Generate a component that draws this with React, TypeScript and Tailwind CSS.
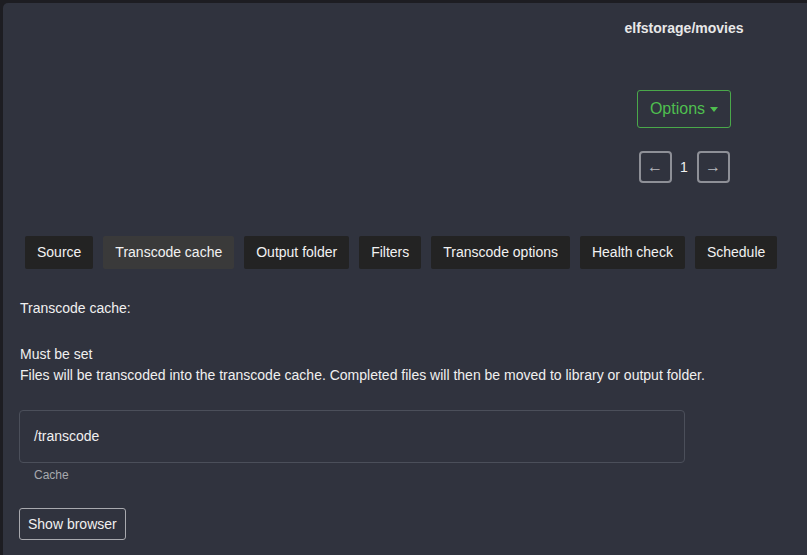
import React from "react";

const tabs = ["Source", "Transcode cache", "Output folder", "Filters", "Transcode options", "Health check", "Schedule"];

export default function App() {
  return (
    <div className="w-[807px] h-[555px] bg-[#1d1d22] pt-[3px] pl-[3px] overflow-hidden" style={{ fontFamily: '"Liberation Sans", Arial, sans-serif' }}>
      <div className="w-full h-full bg-[#30333e] rounded-tl-[5px] text-[#f0f0f0] text-[14px]">
        <div className="flex justify-end pr-[43px]">
          <div className="w-[160px] flex flex-col items-center">
            <div className="mt-[17px] h-[17px] leading-[17px] text-[14px] font-bold text-[#e8e8e8]">elfstorage/movies</div>
            <button className="mt-[53px] w-[94px] h-[38px] border border-[#4aa84a] rounded-[3px] text-[#4fbf4f] text-[16px] flex items-center justify-center gap-[5px]">
              Options
              <span className="w-0 h-0 border-l-[4px] border-r-[4px] border-t-[5px] border-l-transparent border-r-transparent border-t-[#4fbf4f]" />
            </button>
            <div className="mt-[23px] flex items-center gap-[7px]">
              <button className="w-[33px] h-[32px] border-2 border-[#8e9097] rounded-[4px] flex items-center justify-center text-[#b8b9be] text-[16px]">←</button>
              <span className="w-[11px] text-center text-[14px] text-[#f0f0f0]">1</span>
              <button className="w-[33px] h-[32px] border-2 border-[#8e9097] rounded-[4px] flex items-center justify-center text-[#b8b9be] text-[16px]">→</button>
            </div>
          </div>
        </div>
        <div className="mt-[53px] pl-[22px] flex gap-[10px]">
          {tabs.map((t, i) => (
            <div
              key={t}
              className={
                "h-[33px] px-[12px] flex items-center rounded-[2px] text-[14px] text-[#f2f2f2] " +
                (i === 1 ? "bg-[#3a3a3a]" : "bg-[#232323]")
              }
            >
              {t}
            </div>
          ))}
        </div>
        <div className="pl-[17px]">
          <div className="mt-[29px] leading-[21px]">Transcode cache:</div>
          <div className="mt-[25px] leading-[21px]">Must be set</div>
          <div className="leading-[21px]">Files will be transcoded into the transcode cache. Completed files will then be moved to library or output folder.</div>
          <div className="mt-[24px] ml-[-1px] w-[666px] h-[53px] border border-[#4b4f5a] rounded-[4px] flex items-center pl-[14px] text-[14px]">/transcode</div>
          <div className="mt-[4px] pl-[14px] text-[12px] text-[#a8a9ae] leading-[16px]">Cache</div>
          <button className="mt-[25px] ml-[-1px] h-[32px] px-[8px] border border-[#a8a9ae] rounded-[3px] text-[14px] text-[#f0f0f0]">Show browser</button>
        </div>
      </div>
    </div>
  );
}
